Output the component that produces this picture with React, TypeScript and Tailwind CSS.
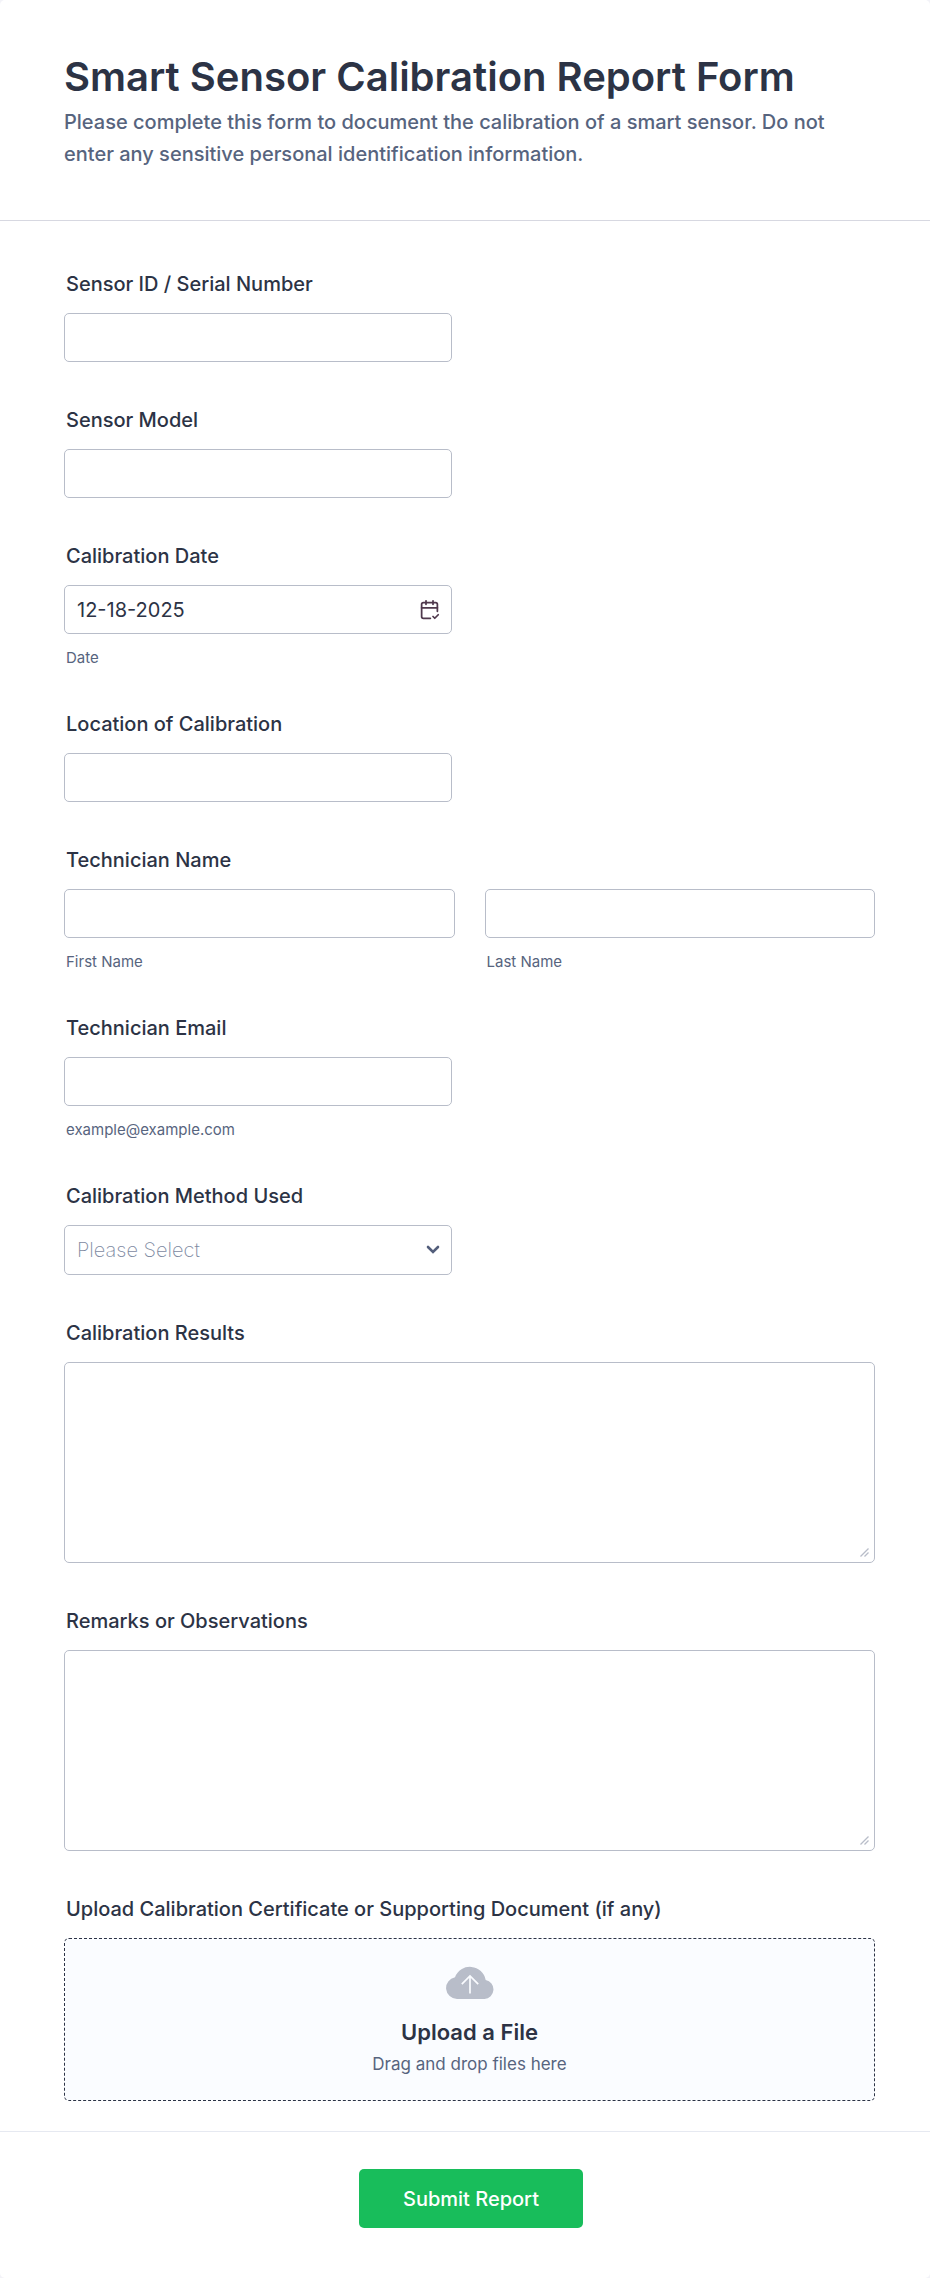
import React, { useState } from 'react';
import { CalendarCheck2 } from 'lucide-react';
import { clsx } from 'clsx';

const inputClass =
    "block w-full h-[49px] rounded-[5px] border border-[#b8bdc9] bg-white px-3 text-xl text-[#2c3345] outline-none focus:border-blue-500";

interface FieldProps {
    id: string;
    label: string;
    hint?: string;
    wide?: boolean;
    children: React.ReactNode;
}

const Field: React.FC<FieldProps> = ({ id, label, hint, wide, children }) => (
    <div>
        <label htmlFor={id} className="block pl-0.5 mb-[17px] text-xl leading-6 font-medium">
            {label}
        </label>
        <div className={clsx(!wide && "w-[388px] max-w-full")}>{children}</div>
        {hint && <Hint id={id}>{hint}</Hint>}
    </div>
);

const Hint: React.FC<{ id: string; children: React.ReactNode }> = ({ id, children }) => (
    <label htmlFor={id} className="block pl-0.5 mt-[15px] -mb-px text-[15px] leading-[18px] text-[#57647e]">
        {children}
    </label>
);

const TextArea: React.FC<{ id: string }> = ({ id }) => (
    <div className="relative">
        <textarea
            id={id}
            className="block w-full h-[201px] rounded-[5px] border border-[#b8bdc9] bg-white px-3 py-2 text-xl text-[#2c3345] outline-none focus:border-blue-500 [&::-webkit-resizer]:hidden"
        />
        <svg
            className="absolute right-1.5 bottom-1.5 pointer-events-none"
            width="9"
            height="9"
            viewBox="0 0 9 9"
            fill="none"
            aria-hidden="true"
        >
            <path d="M0.5 8.5L8.5 0.5M4.5 8.5L8.5 4.5" stroke="#b8bdc9" strokeWidth="1.3" />
        </svg>
    </div>
);

const CloudIcon = () => (
    <svg width="48" height="33" viewBox="0 0 48 33" fill="none" aria-hidden="true">
        <path
            d="M11 33A11 11 0 0 1 9 11.2A16 16 0 0 1 39.7 14A9.6 9.6 0 0 1 38.5 33Z"
            fill="#b8bdc9"
        />
        <path d="M24 27.5V10.5M15.8 18.2L24 10L32.2 18.2" stroke="#fafcff" strokeWidth="1.7" />
    </svg>
);

export default function App() {
    const [date, setDate] = useState('12-18-2025');
    const [method, setMethod] = useState('');

    return (
        <div className="min-h-screen bg-[#f3f3f8] font-['Inter',sans-serif] text-[#2c3345]">
            <form className="min-h-screen rounded-[5px] bg-white" onSubmit={(e) => e.preventDefault()}>
                <header className="pt-[53px] pb-[50px] pl-16 pr-[55px] border-b border-[#d7d8e1]">
                    <h1 className="text-[40px] leading-[48px] font-semibold">
                        Smart Sensor Calibration Report Form
                    </h1>
                    <p className="mt-[5px] text-xl leading-8 font-medium text-[#57647e]">
                        Please complete this form to document the calibration of a smart sensor. Do not
                        enter any sensitive personal identification information.
                    </p>
                </header>

                <div className="flex flex-col gap-[46px] pt-[51px] pb-[30px] pl-16 pr-[55px]">
                    <Field id="sensor-id" label="Sensor ID / Serial Number">
                        <input id="sensor-id" type="text" className={inputClass} />
                    </Field>

                    <Field id="sensor-model" label="Sensor Model">
                        <input id="sensor-model" type="text" className={inputClass} />
                    </Field>

                    <Field id="date" label="Calibration Date" hint="Date">
                        <div className="relative">
                            <input
                                id="date"
                                type="text"
                                value={date}
                                onChange={(e) => setDate(e.target.value)}
                                className={inputClass}
                            />
                            <button
                                type="button"
                                aria-label="Choose date"
                                className="absolute inset-y-0 right-3 flex items-center text-[#4f384c]"
                            >
                                <CalendarCheck2 size={21} strokeWidth={2} />
                            </button>
                        </div>
                    </Field>

                    <Field id="location" label="Location of Calibration">
                        <input id="location" type="text" className={inputClass} />
                    </Field>

                    <Field id="first-name" label="Technician Name" wide>
                        <div className="grid grid-cols-2 gap-[30px]">
                            <div>
                                <input id="first-name" type="text" className={inputClass} />
                                <Hint id="first-name">First Name</Hint>
                            </div>
                            <div>
                                <input id="last-name" type="text" className={inputClass} />
                                <Hint id="last-name">Last Name</Hint>
                            </div>
                        </div>
                    </Field>

                    <Field id="email" label="Technician Email" hint="example@example.com">
                        <input id="email" type="email" className={inputClass} />
                    </Field>

                    <Field id="method" label="Calibration Method Used">
                        <div className="relative">
                            <select
                                id="method"
                                value={method}
                                onChange={(e) => setMethod(e.target.value)}
                                className={clsx(
                                    "block w-full h-[50px] rounded-[5px] border border-[#b8bdc9] bg-white px-3 text-xl outline-none appearance-none focus:border-blue-500",
                                    method ? "text-[#2c3345]" : "font-extralight text-[#7d89a1]"
                                )}
                            >
                                <option value="">Please Select</option>
                            </select>
                            <svg
                                className="absolute right-3 top-5 pointer-events-none"
                                width="14"
                                height="10"
                                viewBox="0 0 14 10"
                                fill="none"
                                aria-hidden="true"
                            >
                                <path d="M2 2L7 7L12 2" stroke="#535e7b" strokeWidth="2.6" strokeLinecap="round" />
                            </svg>
                        </div>
                    </Field>

                    <Field id="results" label="Calibration Results" wide>
                        <TextArea id="results" />
                    </Field>

                    <Field id="remarks" label="Remarks or Observations" wide>
                        <TextArea id="remarks" />
                    </Field>

                    <Field id="upload" label="Upload Calibration Certificate or Supporting Document (if any)" wide>
                        <label
                            htmlFor="upload"
                            className="relative flex flex-col items-center pt-[27px] pb-6 rounded-[5px] border border-dashed border-[#2c3345] bg-[#fafcff] cursor-pointer"
                        >
                            <CloudIcon />
                            <span className="mt-[19px] text-[22px] leading-7 font-semibold">Upload a File</span>
                            <span className="mt-[6px] text-[17px] leading-6 text-[#57647e]">Drag and drop files here</span>
                            <input id="upload" type="file" className="sr-only" />
                        </label>
                    </Field>
                </div>

                <div className="flex justify-center pt-[37px] pb-[50px] pl-3 border-t border-[#e6e9f1]">
                    <button
                        type="submit"
                        className="h-[59px] px-11 rounded-[5px] bg-[#18bd5b] text-xl font-medium text-white"
                    >
                        Submit Report
                    </button>
                </div>
            </form>
        </div>
    );
}
